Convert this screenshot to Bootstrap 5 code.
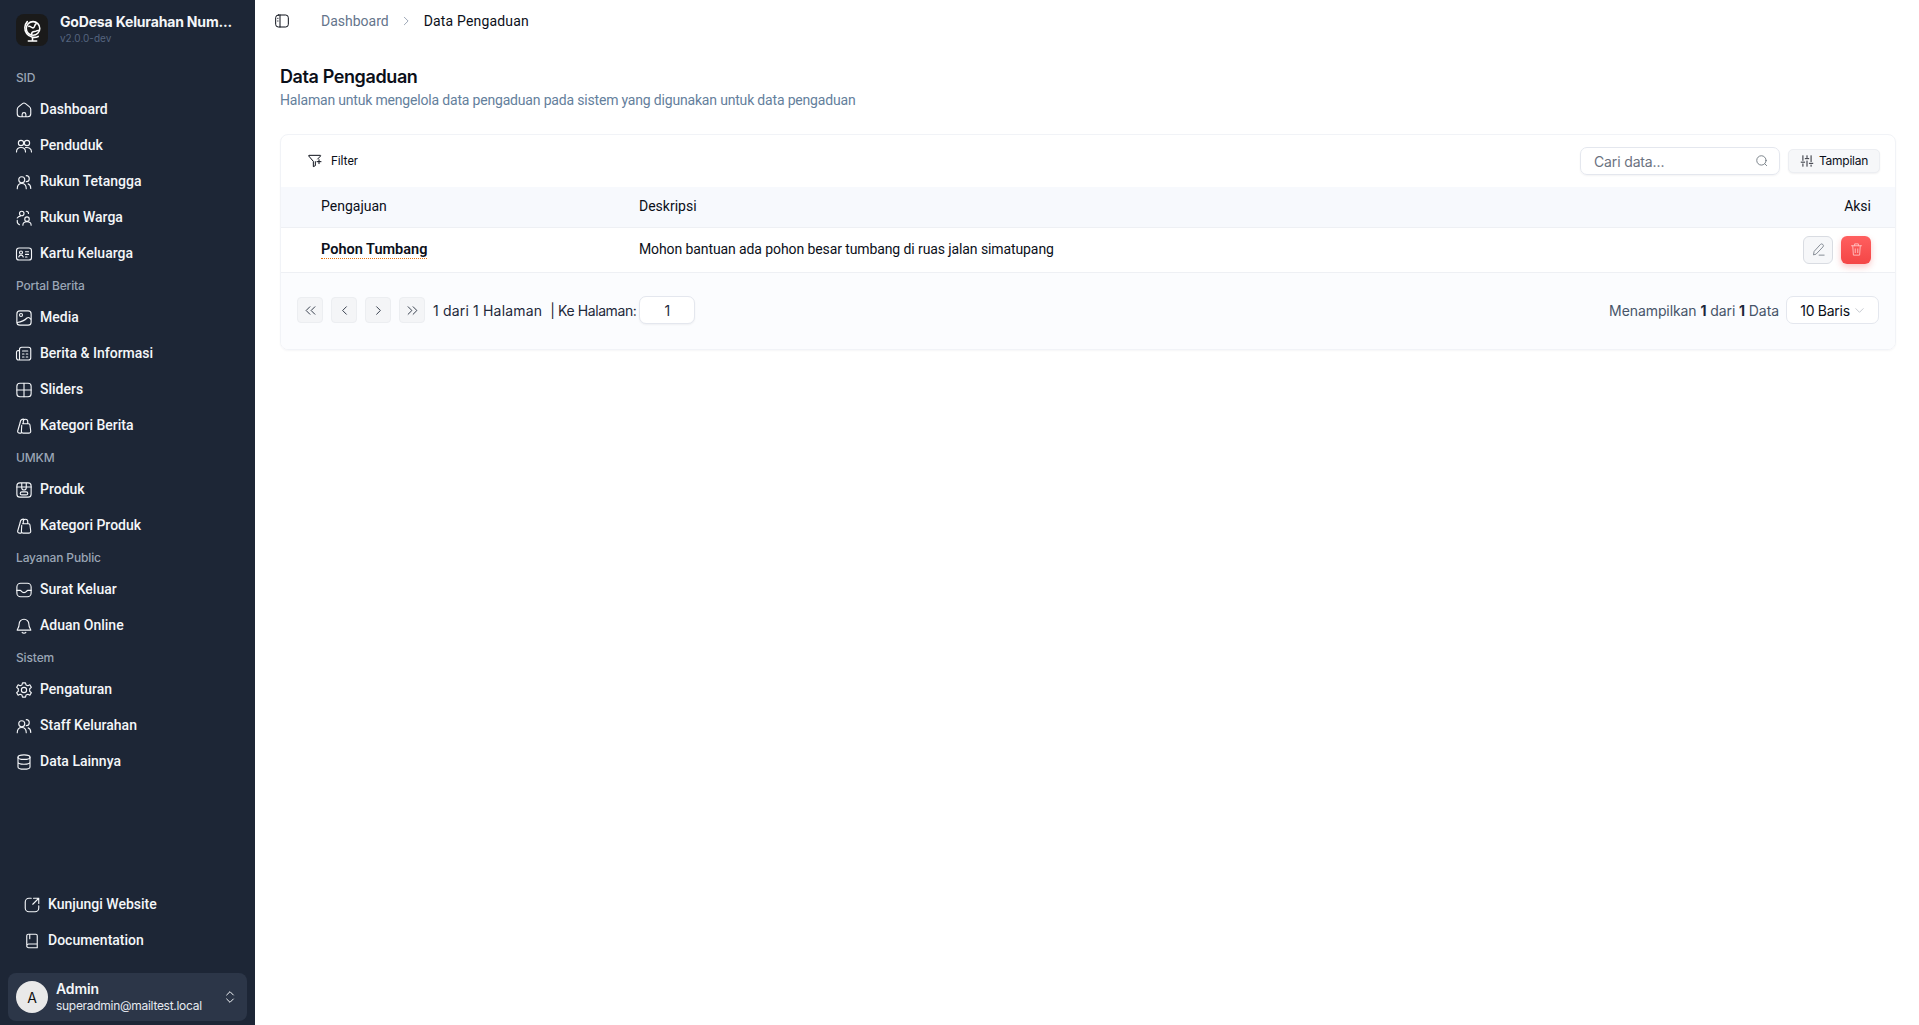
<!DOCTYPE html>
<html lang="id"><head><meta charset="utf-8"><title>Data Pengaduan</title>
<link href="https://cdn.jsdelivr.net/npm/bootstrap@5.3.0/dist/css/bootstrap.min.css" rel="stylesheet">
<style>
html,body{height:100%;overflow:hidden}
body{font-family:Roboto,"Liberation Sans",sans-serif;font-size:14px;color:#0b0f19;background:#fff}
svg{fill:none;stroke:currentColor;stroke-width:1.5;stroke-linecap:round;stroke-linejoin:round;flex:none}
.shell{height:1025px}
.side{width:255px;background:#1d2636;color:#f4f6f9;flex:none}
.brand{height:60px;padding:14px 16px 0;gap:12px}
.logo{width:32px;height:32px;border-radius:8px;background:#1a1a1a}
.brand-name{font-family:Inter,sans-serif;letter-spacing:-.012em;font-size:14px;font-weight:700;line-height:17px;white-space:nowrap;margin-top:-1px}
.brand-ver{font-size:10px;line-height:12px;color:#55647f;margin-top:2px;font-family:Inter,sans-serif}
.grp{font-family:Inter,sans-serif;font-size:12px;font-weight:500;line-height:16px;color:#9aa5b5;padding-left:16px;height:16px;letter-spacing:-.012em}
.grp-first{margin-top:10px}
.itm{height:36px;padding:1px 0 0 15px;gap:7px;color:#f4f6f9;font-weight:500;text-decoration:none;font-size:14px}
.itm svg{width:18px;height:18px}
.list-a{margin-top:5px;margin-bottom:7px}
.foot-wrap{margin-top:auto;position:relative;top:-1px}
.foot-itm{padding-left:23px;gap:7px}
.ucard{margin:14px 8px 4px;height:48px;background:#2c3648;border-radius:8px;padding:0 9px 0 8px;gap:8px;position:relative;top:1px}
.ava{width:32px;height:32px;border-radius:50%;background:#e9e9e9;color:#111;font-size:14px;font-family:Inter,sans-serif}
.uname{font-size:14px;font-weight:600;line-height:17px;font-family:Inter,sans-serif;letter-spacing:-.01em}
.umail{font-size:12px;line-height:16px;color:#e6eaf0;margin-top:1px;font-family:Inter,sans-serif;letter-spacing:-.024em}
.topbar{height:42px;padding-left:19px;color:#0b0f19}
.crumb-mute{color:#64748b;margin-left:31px}
.crumb-sep{color:#64748b;margin:0 13px 0 12px}
.crumb-now{letter-spacing:.012em}
.page-head{padding:23px 25px 0}
.page-title{font-family:Inter,sans-serif;letter-spacing:-.022em;font-size:18px;font-weight:600;line-height:24px;margin:0;color:#0b0f19}
.page-sub{color:#64809c;line-height:20px;margin:0;padding-top:1px;letter-spacing:-.013em}
.panel{margin:24px 23px 0 25px;height:216px;border:1px solid #f1f3f7;border-radius:8px;overflow:hidden;box-shadow:0 1px 2px rgba(15,23,42,.04)}
.tools{height:52px;padding:0 15px 0 26px}
.filter-b{font-size:12px;gap:8px}
.search{font-family:Inter,sans-serif;width:200px;height:28px;border:1px solid #e4e7ee;border-radius:7px;padding:0 10px 0 13px;color:#6b7280;font-size:14px;margin-right:8px;letter-spacing:-.01em;box-shadow:0 1px 2px rgba(15,23,42,.05)}
.tampil{height:24px;width:92px;background:#f6f7f9;border:1px solid #eceef2;border-radius:5px;font-size:12px;gap:5px;box-shadow:0 1px 2px rgba(15,23,42,.06);font-family:Inter,sans-serif;letter-spacing:-.02em}
.tbl{margin:0;--bs-table-bg:transparent}
.tbl th,.tbl td{font-weight:400;padding:0;vertical-align:middle;border-color:#eef0f4;color:#0b0f19}
.tbl thead tr{background:#f7f9fd;height:40px}
.tbl tbody tr{height:45px}
.c1{padding-left:40px!important;width:358px}
.c2-txt{letter-spacing:-.007em}
.c3{padding-right:24px!important}
.ttl-link{font-weight:600;border-bottom:1px dotted #e8710a;line-height:16px;display:inline-block;font-size:14.5px}
.sq{width:30px;height:28px;border-radius:6px}
.sq-edit{background:#f6f7f9;border:1px solid #d9dce2;color:#808690}
.sq-del{background:linear-gradient(#ff5f5f,#f44646);color:#ffc0c0;box-shadow:0 3px 6px rgba(240,70,70,.3)}
.sq svg{width:15px;height:15px}
.pager{height:77px;background:#fbfcfe;padding:0 16px 2px 16px;color:#1e293b;font-family:Inter,sans-serif}
.pg{width:26px;height:26px;background:#f4f5f7;border:1px solid #eceef1;border-radius:4px;color:#2b3342}
.pg svg{width:15px;height:15px}
.pgs{gap:8px}
.goto{width:56px;height:28px;background:#fff;border:1px solid #e4e7ee;border-radius:7px;box-shadow:0 1px 2px rgba(15,23,42,.05);margin-left:3px}
.hal{letter-spacing:.012em}
.hal-b{letter-spacing:-.03em}
.info-r{color:#475569;margin-right:7px;letter-spacing:-.006em}
.info-r b{color:#1e293b;font-weight:700}
.sel{width:93px;height:28px;background:#fff;border:1px solid #e4e7ee;border-radius:7px;color:#0b0f19;gap:4px;letter-spacing:-.02em}
.sel svg{width:11px;height:11px;color:#a0a6b0;stroke-width:1.3}
</style></head><body>
<div class="shell d-flex">
<aside class="side d-flex flex-column">
 <div class="brand d-flex">
  <div class="logo d-flex align-items-center justify-content-center text-white"><svg width="25" height="25" viewBox="0 0 24 24"><circle cx="12.500" cy="10" r="6.500"/><path d="M7 3.500a9 9 0 0 0 10.500 14.200M12 19v3M8 22h8M8.500 8c2-.5 2 1.500 4 1.500s1-3 3-4M11 16c0-2 1-3 3-3s2-1.500 4-1"/></svg></div>
  <div><div class="brand-name">GoDesa Kelurahan Num...</div><div class="brand-ver">v2.0.0-dev</div></div>
 </div>
 <div class="grp grp-first">SID</div>
 <div class="list-a">
  <a class="itm d-flex align-items-center"><svg viewBox="0 0 24 24"><path d="M3 11c0-1.500.8-2.500 2-3.500l5-4c1.200-1 2.800-1 4 0l5 4c1.200 1 2 2 2 3.500v6a4 4 0 0 1-4 4H7a4 4 0 0 1-4-4zM9.500 21v-3a2.500 2.500 0 0 1 5 0v3"/></svg>Dashboard</a>
  <a class="itm d-flex align-items-center"><svg viewBox="0 0 24 24"><circle cx="8" cy="8" r="3.500"/><circle cx="16" cy="8" r="3.500"/><path d="M2 20c0-4 2.500-6 6-6s6 2 6 6M14 14.200c4-.8 8 1.300 8 5.800"/></svg>Penduduk</a>
  <a class="itm d-flex align-items-center"><svg viewBox="0 0 24 24"><circle cx="9" cy="9" r="4"/><path d="M3 21c0-4.500 2.500-7 6-7s6 2.500 6 7M15 3.500a4 4 0 0 1 0 8M17.500 14.500c2.500.8 3.500 3 3.500 6"/></svg>Rukun Tetangga</a>
  <a class="itm d-flex align-items-center"><svg viewBox="0 0 24 24"><circle cx="9" cy="6" r="3"/><path d="M3 12a6 6 0 0 1 4-2.500M3 15v1a5 5 0 0 0 3 5M15 3a3 3 0 0 1 3 3"/><circle cx="16" cy="13.500" r="3"/><path d="M10.500 21.500c0-3 2-4.500 5.500-4.500s5.500 1.500 5.500 4.500"/></svg>Rukun Warga</a>
  <a class="itm d-flex align-items-center"><svg viewBox="0 0 24 24"><rect x="2" y="4" width="20" height="16" rx="3.500"/><circle cx="8" cy="10" r="2"/><path d="M5 16c.5-2 1.500-2.500 3-2.500s2.500.5 3 2.500M14 9h4M14 12.500h4M14 16h2"/></svg>Kartu Keluarga</a>
 </div>
 <div class="grp">Portal Berita</div>
 <div class="list-a">
  <a class="itm d-flex align-items-center"><svg viewBox="0 0 24 24"><rect x="2.500" y="2.500" width="19" height="19" rx="4"/><circle cx="8" cy="8" r="2"/><path d="M3 18c6-1 11-4 13-6 2-1.500 4 0 5 1.500"/></svg>Media</a>
  <a class="itm d-flex align-items-center"><svg viewBox="0 0 24 24"><path d="M6 19V6a3 3 0 0 1 3-3h9a3 3 0 0 1 3 3v11a3 3 0 0 1-3 3H5a3 3 0 0 1-3-3V9.500A2 2 0 0 1 4 7.500h2M10 8h7M10 12h2M15 12h2M10 16h2M15 16h2"/></svg>Berita &amp; Informasi</a>
  <a class="itm d-flex align-items-center"><svg viewBox="0 0 24 24"><rect x="2.500" y="3" width="19" height="18" rx="4"/><path d="M12 3v18M2.500 12h19"/></svg>Sliders</a>
  <a class="itm d-flex align-items-center"><svg viewBox="0 0 24 24"><path d="M10 9h8a2 2 0 0 1 2 2l1 8a2.500 2.500 0 0 1-2.500 2.500H11A2.500 2.500 0 0 1 8.500 19L9 11M11 9V6a3 3 0 0 1 6 0v3M8 21.500H6A2.500 2.500 0 0 1 3.500 19L7 7a4 4 0 0 1 5-4"/></svg>Kategori Berita</a>
 </div>
 <div class="grp">UMKM</div>
 <div class="list-a">
  <a class="itm d-flex align-items-center"><svg viewBox="0 0 24 24"><rect x="2.500" y="2.500" width="19" height="19" rx="4"/><path d="M2.500 8h19M9 3v6a3 3 0 0 0 6 0V3"/><rect x="7" y="14.500" width="10" height="4" rx="2"/></svg>Produk</a>
  <a class="itm d-flex align-items-center"><svg viewBox="0 0 24 24"><path d="M10 9h8a2 2 0 0 1 2 2l1 8a2.500 2.500 0 0 1-2.500 2.500H11A2.500 2.500 0 0 1 8.500 19L9 11M11 9V6a3 3 0 0 1 6 0v3M8 21.500H6A2.500 2.500 0 0 1 3.500 19L7 7a4 4 0 0 1 5-4"/></svg>Kategori Produk</a>
 </div>
 <div class="grp">Layanan Public</div>
 <div class="list-a">
  <a class="itm d-flex align-items-center"><svg viewBox="0 0 24 24"><rect x="2.500" y="3" width="19" height="18" rx="5"/><path d="M2.500 12.500H7c1.500 0 1.500 3 5 3s3.500-3 5-3h4.500"/></svg>Surat Keluar</a>
  <a class="itm d-flex align-items-center"><svg viewBox="0 0 24 24"><path d="M12 3a6.500 6.500 0 0 0-6.500 6.500c0 5-2.500 6-2.500 8h18c0-2-2.500-3-2.500-8A6.500 6.500 0 0 0 12 3zM9.500 20.500c1 1.300 4 1.300 5 0"/></svg>Aduan Online</a>
 </div>
 <div class="grp">Sistem</div>
 <div class="list-a">
  <a class="itm d-flex align-items-center"><svg viewBox="0 0 24 24"><circle cx="12" cy="12" r="3.500"/><path d="M10 2.500h4l.7 2.800 2.500 1.100 2.600-1.300 2 3.400-2.200 1.900v3.200l2.200 1.900-2 3.400-2.600-1.300-2.500 1.100-.7 2.800h-4l-.7-2.800-2.500-1.100-2.600 1.300-2-3.400 2.200-1.900v-3.200L2.200 8.500l2-3.400 2.600 1.300 2.500-1.100z"/></svg>Pengaturan</a>
  <a class="itm d-flex align-items-center"><svg viewBox="0 0 24 24"><circle cx="9" cy="9" r="4"/><path d="M3 21c0-4.500 2.500-7 6-7s6 2.500 6 7M15 3.500a4 4 0 0 1 0 8M17.500 14.500c2.500.8 3.500 3 3.500 6"/></svg>Staff Kelurahan</a>
  <a class="itm d-flex align-items-center"><svg viewBox="0 0 24 24"><ellipse cx="12" cy="5.500" rx="8" ry="3"/><path d="M4 5.500v13c0 1.700 3.600 3 8 3s8-1.300 8-3v-13M4 12c0 1.700 3.600 3 8 3s8-1.300 8-3"/></svg>Data Lainnya</a>
 </div>
 <div class="foot-wrap">
  <a class="itm foot-itm d-flex align-items-center"><svg viewBox="0 0 24 24"><path d="M11 3H8a5 5 0 0 0-5 5v8a5 5 0 0 0 5 5h8a5 5 0 0 0 5-5v-3M14 3h7v7M21 3l-8 8"/></svg>Kunjungi Website</a>
  <a class="itm foot-itm d-flex align-items-center"><svg viewBox="0 0 24 24"><path d="M5 17V5a2 2 0 0 1 2-2h10a2 2 0 0 1 2 2v12M5 18.500A2.500 2.500 0 0 1 7.500 16H19v5H7.500A2.500 2.500 0 0 1 5 18.500zM9 3v6"/></svg>Documentation</a>
  <div class="ucard d-flex align-items-center">
   <div class="ava d-flex align-items-center justify-content-center flex-none">A</div>
   <div class="flex-grow-1"><div class="uname">Admin</div><div class="umail">superadmin@mailtest.local</div></div>
   <svg width="16" height="16" viewBox="0 0 24 24" stroke-width="2"><path d="m7 9 5-5 5 5M7 15l5 5 5-5"/></svg>
  </div>
 </div>
</aside>
<main class="flex-grow-1 d-flex flex-column" style="min-width:0">
 <div class="topbar d-flex align-items-center">
  <svg width="16" height="16" viewBox="0 0 24 24"><rect x="2.500" y="3" width="19" height="18" rx="4"/><path d="M9 3v18M5.500 8h.5M5.500 12h.5"/></svg>
  <span class="crumb-mute">Dashboard</span>
  <svg class="crumb-sep" width="10" height="10" viewBox="0 0 24 24" stroke-width="2.500"><path d="m8 3 9 9-9 9"/></svg>
  <span class="crumb-now">Data Pengaduan</span>
 </div>
 <div class="page-head"><h1 class="page-title">Data Pengaduan</h1><p class="page-sub">Halaman untuk mengelola data pengaduan pada sistem yang digunakan untuk data pengaduan</p></div>
 <div class="panel">
  <div class="tools d-flex align-items-center">
   <div class="filter-b d-flex align-items-center"><svg width="16" height="16" viewBox="0 0 24 24"><path d="M16 9l4.400-4.500c.4-.4.100-1-.4-1H3c-.5 0-.8.6-.4 1l6.900 8v8l3-1.500V13M18 10v6M15 13h6"/></svg>Filter</div>
   <div class="search d-flex align-items-center justify-content-between ms-auto">Cari data...<svg width="14" height="14" viewBox="0 0 24 24" class="text-secondary"><circle cx="11" cy="11" r="8"/><path d="m20 20-3-3"/></svg></div>
   <div class="tampil d-flex align-items-center justify-content-center"><svg width="14" height="14" viewBox="0 0 24 24"><path d="M5 3v8M5 17v4M12 3v3M12 12v9M19 3v10M19 19v2M2 14h6M9 8h6M16 16h6"/></svg>Tampilan</div>
  </div>
  <table class="table tbl">
   <thead><tr><th class="c1">Pengajuan</th><th>Deskripsi</th><th class="c3 text-end">Aksi</th></tr></thead>
   <tbody><tr><td class="c1"><span class="ttl-link">Pohon Tumbang</span></td><td class="c2-txt">Mohon bantuan ada pohon besar tumbang di ruas jalan simatupang</td><td class="c3"><div class="d-flex justify-content-end gap-2">
    <div class="sq sq-edit d-flex align-items-center justify-content-center"><svg viewBox="0 0 24 24"><path d="M4 20l1-5L15 4a2.500 2.500 0 0 1 4 4L8.500 19zM13 21h8"/></svg></div>
    <div class="sq sq-del d-flex align-items-center justify-content-center"><svg viewBox="0 0 24 24"><path d="M4 6h16M9 6V3h6v3M6 6l1 15h10l1-15M10 11v6M14 11v6"/></svg></div>
   </div></td></tr></tbody>
  </table>
  <div class="pager d-flex align-items-center">
   <div class="d-flex pgs align-items-center">
    <div class="pg d-flex align-items-center justify-content-center"><svg viewBox="0 0 24 24"><path d="m11 6-6 6 6 6M19 6l-6 6 6 6"/></svg></div>
    <div class="pg d-flex align-items-center justify-content-center"><svg viewBox="0 0 24 24"><path d="m15 6-6 6 6 6"/></svg></div>
    <div class="pg d-flex align-items-center justify-content-center"><svg viewBox="0 0 24 24"><path d="m9 6 6 6-6 6"/></svg></div>
    <div class="pg d-flex align-items-center justify-content-center"><svg viewBox="0 0 24 24"><path d="m5 6 6 6-6 6M13 6l6 6-6 6"/></svg></div>
    <span><span class="hal">1 dari 1 Halaman &nbsp;</span><span class="hal-b">| Ke Halaman:</span></span>
   </div>
   <div class="goto d-flex align-items-center justify-content-center">1</div>
   <div class="info-r ms-auto">Menampilkan <b>1</b> dari <b>1</b> Data</div>
   <div class="sel d-flex align-items-center justify-content-center">10 Baris<svg viewBox="0 0 24 24"><path d="m4 8 8 8 8-8"/></svg></div>
  </div>
 </div>
</main>
</div>
<script src="https://cdn.jsdelivr.net/npm/bootstrap@5.3.0/dist/js/bootstrap.bundle.min.js"></script>
</body></html>
